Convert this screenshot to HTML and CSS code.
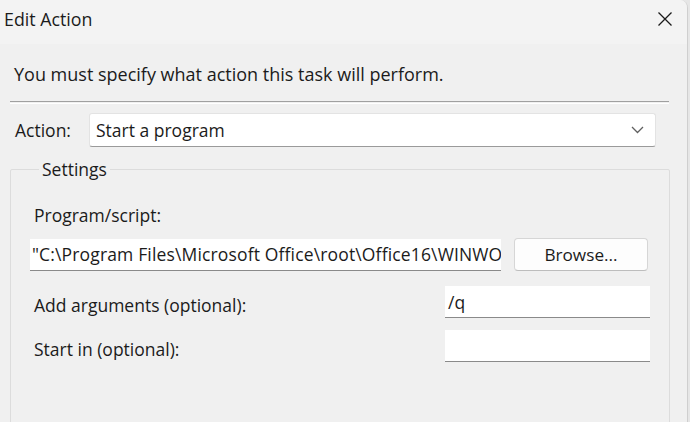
FILE: index.html
```html
<!DOCTYPE html>
<html lang="en">
<head>
<meta charset="utf-8">
<title>Edit Action</title>
<link rel="stylesheet" href="styles.css">
</head>
<body>
<div class="window">
  <div class="titlebar">
    <span class="title">Edit Action</span>
    <svg class="close" width="16" height="16" viewBox="0 0 16 16"><path d="M1.5 1.5 L14.5 14.5 M14.5 1.5 L1.5 14.5" stroke="#1a1a1a" stroke-width="1.3" fill="none"/></svg>
  </div>
  <div class="content">
    <p class="intro">You must specify what action this task will perform.</p>
    <div class="sep"></div>
    <div class="action-row">
      <span class="label">Action:</span>
      <div class="combo">
        <span>Start a program</span>
        <svg width="13" height="8" viewBox="0 0 13 8"><path d="M1 1 L6.5 6.5 L12 1" stroke="#606060" stroke-width="1.3" fill="none"/></svg>
      </div>
    </div>
    <fieldset class="settings">
      <legend>Settings</legend>
      <div class="field-label">Program/script:</div>
      <div class="prog-row">
        <div class="input wide"><span class="clip">"C:\Program Files\Microsoft Office\root\Office16\WINWORD.EXE"</span></div>
        <button class="btn">Browse...</button>
      </div>
      <div class="opt-row first">
        <span class="label">Add arguments (optional):</span>
        <div class="input short">/q</div>
      </div>
      <div class="opt-row">
        <span class="label">Start in (optional):</span>
        <div class="input short"></div>
      </div>
    </fieldset>
  </div>
</div>
</body>
</html>
```

FILE: styles.css
```css
html, body {
  margin: 0;
  padding: 0;
  background: #e6e6e6;
  width: 690px;
  height: 422px;
  overflow: hidden;
}

.window {
  width: 687px;
  height: 422px;
  background: #f0f0f0;
  border-right: 1px solid #cfcfcf;
  border-top-right-radius: 8px;
  overflow: hidden;
  font-family: "Open Sans", "Noto Sans", sans-serif;
  color: #1b1b1b;
  font-size: 17.5px;
}

.titlebar {
  height: 44px;
  background: #f3f3f3;
  display: flex;
  align-items: center;
  justify-content: space-between;
  padding: 0 14px 6px 4px;
  box-sizing: border-box;
}

.title {
  font-size: 17.8px;
}

.content {
  padding: 0 0 0 10px;
}

.intro {
  margin: 0;
  padding: 0 0 0 4px;
  height: 56px;
  line-height: 60px;
  font-size: 18px;
}

.sep {
  width: 659px;
  height: 1px;
  border-top: 1px solid #a0a0a0;
  border-bottom: 1px solid #ffffff;
  margin-top: 1px;
}

.action-row {
  display: flex;
  align-items: center;
  margin-top: 9px;
}

.action-row .label {
  width: 79px;
  padding-left: 5px;
  box-sizing: border-box;
}

.combo {
  width: 567px;
  height: 34px;
  background: #fff;
  border: 1px solid #e3e3e3;
  border-bottom: 1px solid #9a9a9a;
  border-radius: 3px;
  box-sizing: border-box;
  display: flex;
  align-items: center;
  justify-content: space-between;
  padding: 0 11px 0 6px;
}

.settings {
  margin: 10px 0 0 0;
  width: 660px;
  box-sizing: border-box;
  border: 1px solid #dcdcdc;
  border-radius: 2px;
  padding: 14px 0 0 19px;
  height: 320px;
}

.settings legend {
  padding: 0 3px;
  margin-left: 9px;
  line-height: 24px;
}

.field-label {
  padding-left: 4px;
  margin-top: 8px;
  line-height: 24px;
}

.prog-row {
  display: flex;
  align-items: center;
  gap: 13px;
  margin-top: 11px;
}

.input {
  background: #fff;
  border-bottom: 1px solid #8a8a8a;
  height: 32px;
  box-sizing: border-box;
  display: flex;
  align-items: center;
  padding-left: 2px;
  white-space: nowrap;
  overflow: hidden;
}

.input.wide {
  width: 471px;
  flex-shrink: 0;
}

.clip {
  letter-spacing: 0.15px;
}

.input.short {
  width: 205px;
  padding-left: 3px;
}

.btn {
  width: 134px;
  height: 33px;
  flex-shrink: 0;
  background: #fdfdfd;
  border: 1px solid #d6d6d6;
  border-bottom-color: #bdbdbd;
  border-radius: 4px;
  font-family: inherit;
  font-size: 17.2px;
  color: #1b1b1b;
  padding: 0;
}

.opt-row {
  display: flex;
  align-items: center;
  justify-content: space-between;
  width: 620px;
  margin-top: 12px;
}

.opt-row.first {
  margin-top: 15px;
}

.opt-row .label {
  padding-left: 4px;
  padding-top: 6px;
}
```
